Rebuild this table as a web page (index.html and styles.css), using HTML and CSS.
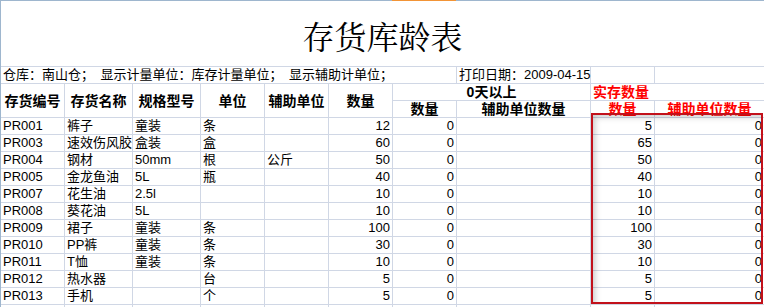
FILE: index.html
```html
<!DOCTYPE html>
<html lang="zh-CN">
<head>
<meta charset="utf-8">
<title>存货库龄表</title>
<link rel="stylesheet" href="styles.css">
</head>
<body>
<div class="page">
  <div class="topline"></div>
  <div class="sheet">
    <div class="c title">存货库龄表</div>

    <div class="c info">仓库：南山仓；&ensp;显示计量单位：库存计量单位；&ensp;显示辅助计单位；</div>
    <div class="c">打印日期：2009-04-15</div>
    <div class="c"></div>
    <div class="c"></div>

    <div class="c h tall">存货编号</div>
    <div class="c h tall">存货名称</div>
    <div class="c h tall">规格型号</div>
    <div class="c h tall">单位</div>
    <div class="c h tall">辅助单位</div>
    <div class="c h tall">数量</div>
    <div class="c h span2">0天以上</div>
    <div class="c h span2 red left">实存数量</div>
    <div class="c h">数量</div>
    <div class="c h">辅助单位数量</div>
    <div class="c h red">数量</div>
    <div class="c h red">辅助单位数量</div>

    <div class="c">PR001</div><div class="c">裤子</div><div class="c">童装</div><div class="c">条</div><div class="c"></div><div class="c n">12</div><div class="c n">0</div><div class="c"></div><div class="c n">5</div><div class="c n">0</div>
    <div class="c">PR003</div><div class="c">速效伤风胶</div><div class="c">盒装</div><div class="c">盒</div><div class="c"></div><div class="c n">60</div><div class="c n">0</div><div class="c"></div><div class="c n">65</div><div class="c n">0</div>
    <div class="c">PR004</div><div class="c">钢材</div><div class="c">50mm</div><div class="c">根</div><div class="c">公斤</div><div class="c n">50</div><div class="c n">0</div><div class="c"></div><div class="c n">50</div><div class="c n">0</div>
    <div class="c">PR005</div><div class="c">金龙鱼油</div><div class="c">5L</div><div class="c">瓶</div><div class="c"></div><div class="c n">40</div><div class="c n">0</div><div class="c"></div><div class="c n">40</div><div class="c n">0</div>
    <div class="c">PR007</div><div class="c">花生油</div><div class="c">2.5l</div><div class="c"></div><div class="c"></div><div class="c n">10</div><div class="c n">0</div><div class="c"></div><div class="c n">10</div><div class="c n">0</div>
    <div class="c">PR008</div><div class="c">葵花油</div><div class="c">5L</div><div class="c"></div><div class="c"></div><div class="c n">10</div><div class="c n">0</div><div class="c"></div><div class="c n">10</div><div class="c n">0</div>
    <div class="c">PR009</div><div class="c">裙子</div><div class="c">童装</div><div class="c">条</div><div class="c"></div><div class="c n">100</div><div class="c n">0</div><div class="c"></div><div class="c n">100</div><div class="c n">0</div>
    <div class="c">PR010</div><div class="c">PP裤</div><div class="c">童装</div><div class="c">条</div><div class="c"></div><div class="c n">30</div><div class="c n">0</div><div class="c"></div><div class="c n">30</div><div class="c n">0</div>
    <div class="c">PR011</div><div class="c">T恤</div><div class="c">童装</div><div class="c">条</div><div class="c"></div><div class="c n">10</div><div class="c n">0</div><div class="c"></div><div class="c n">10</div><div class="c n">0</div>
    <div class="c">PR012</div><div class="c">热水器</div><div class="c"></div><div class="c">台</div><div class="c"></div><div class="c n">5</div><div class="c n">0</div><div class="c"></div><div class="c n">5</div><div class="c n">0</div>
    <div class="c">PR013</div><div class="c">手机</div><div class="c"></div><div class="c">个</div><div class="c"></div><div class="c n">5</div><div class="c n">0</div><div class="c"></div><div class="c n">5</div><div class="c n">0</div>

    <div class="c"></div><div class="c"></div><div class="c"></div><div class="c"></div><div class="c"></div><div class="c"></div><div class="c"></div><div class="c"></div><div class="c"></div><div class="c"></div>
  </div>
  <div class="highlight"></div>
</div>
</body>
</html>
```

FILE: styles.css
```css
html, body {
  margin: 0;
  padding: 0;
  background: #ffffff;
  overflow: hidden;
}

.page {
  position: relative;
  width: 764px;
  height: 307px;
  overflow: hidden;
  font-family: "Liberation Sans", "Noto Sans CJK SC", sans-serif;
  font-size: 13px;
  color: #000000;
}

.topline {
  height: 1px;
  background: linear-gradient(to right, #9eb6ce 392px, #f29436 392px, #f29436 456px, #9eb6ce 456px);
}

.sheet {
  display: grid;
  grid-template-columns: 63px 67px 67px 63px 63px 63px 63px 133px 63px 109px;
  grid-template-rows: 65px 16px 16px 16px repeat(12, 16px);
  gap: 1px;
  background: #d0d7e5;
  border-left: 1px solid #9eb6ce;
}

.c {
  background: #ffffff;
  line-height: 16px;
  padding: 0 2px;
  white-space: nowrap;
  overflow: visible;
}

.n {
  text-align: right;
}

.title {
  grid-column: 1 / -1;
  display: flex;
  align-items: center;
  justify-content: center;
  font-family: "Noto Serif CJK SC", "Noto Sans CJK SC", serif;
  font-size: 32px;
  line-height: 1;
  padding-top: 2px;
}

.info {
  grid-column: 1 / 8;
}

.h {
  font-weight: 700;
  font-size: 14px;
  text-align: center;
}

.tall {
  grid-row: span 2;
  display: flex;
  align-items: center;
  justify-content: center;
}

.span2 {
  grid-column: span 2;
}

.red {
  color: #ff0000;
}

.left {
  text-align: left;
}

.highlight {
  position: absolute;
  left: 591px;
  top: 113px;
  width: 172px;
  height: 191px;
  box-sizing: border-box;
  border: 2px solid #c2111b;
  box-shadow: inset 4px 4px 6px -2px rgba(0, 0, 0, 0.22);
  pointer-events: none;
}
```
